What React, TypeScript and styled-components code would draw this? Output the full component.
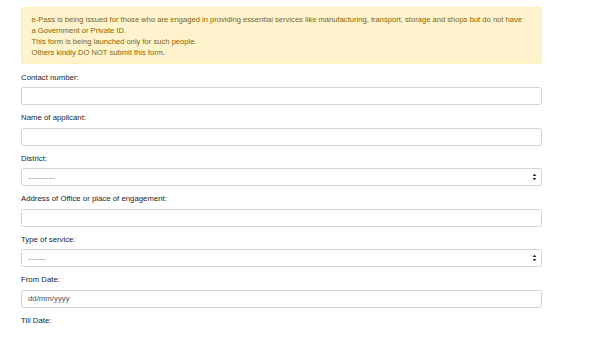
import React from 'react';
import styled, { createGlobalStyle } from 'styled-components';

const GlobalStyle = createGlobalStyle`
  html, body {
    margin: 0;
    padding: 0;
    background: #fff;
  }
  body {
    font-family: 'Liberation Sans', Arial, sans-serif;
    color: #212529;
  }
  * {
    box-sizing: border-box;
  }
`;

interface Field {
  label: string;
  kind: 'text' | 'select' | 'date' | 'none';
  value?: string;
}

const FIELDS: Field[] = [
  { label: 'Contact number:', kind: 'text' },
  { label: 'Name of applicant:', kind: 'text' },
  { label: 'District:', kind: 'select', value: '---------' },
  { label: 'Address of Office or place of engagement:', kind: 'text' },
  { label: 'Type of service:', kind: 'select', value: '------' },
  { label: 'From Date:', kind: 'date', value: 'dd/mm/yyyy' },
  { label: 'Till Date:', kind: 'none' },
];

const SelectArrows = () => (
  <svg width="5" height="8" viewBox="0 0 5 8">
    <path d="M0.5 3 L2.5 0.8 L4.5 3 Z" fill="#333" />
    <path d="M0.5 5 L2.5 7.2 L4.5 5 Z" fill="#333" />
  </svg>
);

const renderControl = (field: Field) => {
  if (field.kind === 'none') return null;
  if (field.kind === 'select') {
    return (
      <SelectBox>
        <Value $muted>{field.value}</Value>
        <Arrows>
          <SelectArrows />
        </Arrows>
      </SelectBox>
    );
  }
  return <InputBox>{field.value && <Value>{field.value}</Value>}</InputBox>;
};

const App = () => {
  return (
    <Page>
      <GlobalStyle />
      <Alert>
        e-Pass is being issued for those who are engaged in providing essential
        services like manufacturing, transport, storage and shops but do not
        have a Government or Private ID.
        <br />
        This form is being launched only for such people.
        <br />
        Others kindly DO NOT submit this form.
      </Alert>
      <Form>
        {FIELDS.map(field => (
          <Group key={field.label}>
            <Label>{field.label}</Label>
            {renderControl(field)}
          </Group>
        ))}
      </Form>
    </Page>
  );
};

const Page = styled.div`
  width: 563px;
  height: 338px;
  overflow: hidden;
  padding: 7px 21px 0;
`;

const Alert = styled.div`
  background: #fff3cd;
  border: 1px solid #ffeeba;
  border-radius: 2.5px;
  color: #856404;
  font-size: 7.6px;
  line-height: 11px;
  padding: 5.5px 16px 5.5px 9.5px;
  margin-bottom: 7.5px;
`;

const Form = styled.div`
  display: flex;
  flex-direction: column;
`;

const Group = styled.div`
  display: flex;
  flex-direction: column;
  margin-bottom: 7px;
`;

const Label = styled.label`
  font-size: 7.8px;
  line-height: 11px;
  color: #212529;
  margin-bottom: 4.5px;
`;

const InputBox = styled.div`
  position: relative;
  display: flex;
  align-items: center;
  height: 18px;
  padding: 0 6px;
  border: 1px solid #ced4da;
  border-radius: 2.5px;
  background: #fff;
`;

const SelectBox = styled(InputBox)`
  justify-content: space-between;
  padding-right: 4px;
`;

const Value = styled.span<{ $muted?: boolean }>`
  font-size: 7.8px;
  color: ${props => (props.$muted ? '#6c757d' : '#495057')};
  letter-spacing: ${props => (props.$muted ? '0.4px' : '0')};
`;

const Arrows = styled.span`
  display: flex;
  align-items: center;
`;

export default App;
